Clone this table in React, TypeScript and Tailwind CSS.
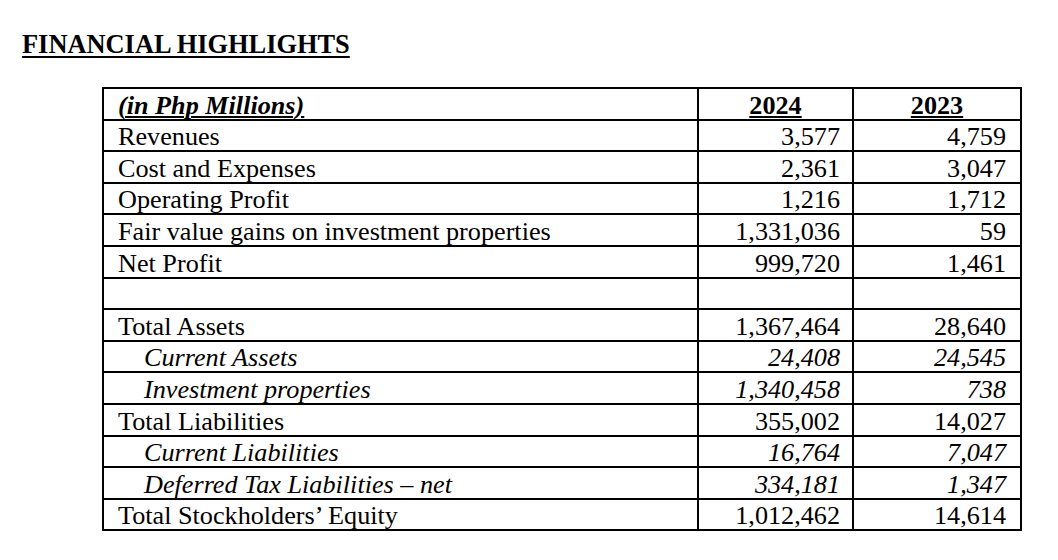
import React from "react";

type Row = {
  label: string;
  y2024: string;
  y2023: string;
  sub?: boolean;
};

const rows: Row[] = [
  { label: "Revenues", y2024: "3,577", y2023: "4,759" },
  { label: "Cost and Expenses", y2024: "2,361", y2023: "3,047" },
  { label: "Operating Profit", y2024: "1,216", y2023: "1,712" },
  { label: "Fair value gains on investment properties", y2024: "1,331,036", y2023: "59" },
  { label: "Net Profit", y2024: "999,720", y2023: "1,461" },
  { label: "", y2024: "", y2023: "" },
  { label: "Total Assets", y2024: "1,367,464", y2023: "28,640" },
  { label: "Current Assets", y2024: "24,408", y2023: "24,545", sub: true },
  { label: "Investment properties", y2024: "1,340,458", y2023: "738", sub: true },
  { label: "Total Liabilities", y2024: "355,002", y2023: "14,027" },
  { label: "Current Liabilities", y2024: "16,764", y2023: "7,047", sub: true },
  { label: "Deferred Tax Liabilities – net", y2024: "334,181", y2023: "1,347", sub: true },
  { label: "Total Stockholders’ Equity", y2024: "1,012,462", y2023: "14,614" },
];

const cell = "border-2 border-black h-[31.6px] p-0 align-bottom leading-[27px]";

export default function App() {
  return (
    <div className="w-[1058px] h-[560px] bg-white text-black font-['Liberation_Serif','Times_New_Roman',serif] pt-[29px] pl-[22px]">
      <h1 className="text-[26.4px] leading-[30px] font-bold underline decoration-2 underline-offset-[3px]">
        FINANCIAL HIGHLIGHTS
      </h1>

      <table className="mt-[28px] ml-[80px] border-collapse text-[26.2px] w-[918px] table-fixed">
        <colgroup>
          <col className="w-[595px]" />
          <col className="w-[155px]" />
          <col className="w-[168px]" />
        </colgroup>
        <thead>
          <tr>
            <th className={`${cell} text-left font-bold italic pl-[14px]`}>
              <span className="underline decoration-2 underline-offset-[2px]">(in Php Millions)</span>
            </th>
            <th className={`${cell} text-center font-bold`}>
              <span className="underline decoration-2 underline-offset-[2px]">2024</span>
            </th>
            <th className={`${cell} text-center font-bold`}>
              <span className="underline decoration-2 underline-offset-[2px]">2023</span>
            </th>
          </tr>
        </thead>
        <tbody>
          {rows.map((r, i) => (
            <tr key={i}>
              <td className={`${cell} text-left ${r.sub ? "italic pl-[40px]" : "pl-[14px]"}`}>{r.label}</td>
              <td className={`${cell} text-right pr-[12px] ${r.sub ? "italic" : ""}`}>{r.y2024}</td>
              <td className={`${cell} text-right pr-[14px] ${r.sub ? "italic" : ""}`}>{r.y2023}</td>
            </tr>
          ))}
        </tbody>
      </table>
    </div>
  );
}
